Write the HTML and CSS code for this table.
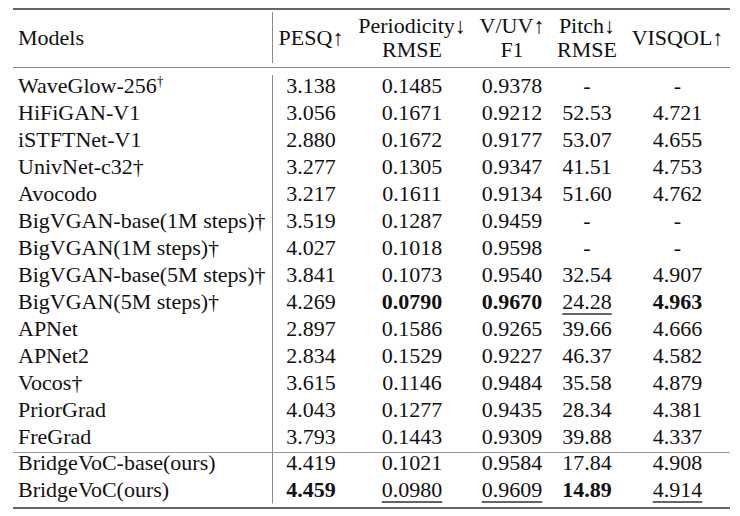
FILE: index.html
```html
<!DOCTYPE html>
<html lang="en">
<head>
<meta charset="utf-8">
<title>Vocoder comparison</title>
<link rel="stylesheet" href="styles.css">
</head>
<body>
<table class="results">
  <colgroup>
    <col class="c-model"><col class="c-pesq"><col class="c-per"><col class="c-vuv"><col class="c-pitch"><col class="c-visqol">
  </colgroup>
  <thead>
    <tr class="head">
      <th class="model">Models</th>
      <th>PESQ↑</th>
      <th>Periodicity↓<br>RMSE</th>
      <th>V/UV↑<br>F1</th>
      <th>Pitch↓<br>RMSE</th>
      <th>VISQOL↑</th>
    </tr>
  </thead>
  <tbody>
    <tr class="first"><td class="model">WaveGlow-256<span class="sup">†</span></td><td>3.138</td><td>0.1485</td><td>0.9378</td><td>-</td><td>-</td></tr>
    <tr><td class="model">HiFiGAN-V1</td><td>3.056</td><td>0.1671</td><td>0.9212</td><td>52.53</td><td>4.721</td></tr>
    <tr><td class="model">iSTFTNet-V1</td><td>2.880</td><td>0.1672</td><td>0.9177</td><td>53.07</td><td>4.655</td></tr>
    <tr><td class="model">UnivNet-c32†</td><td>3.277</td><td>0.1305</td><td>0.9347</td><td>41.51</td><td>4.753</td></tr>
    <tr><td class="model">Avocodo</td><td>3.217</td><td>0.1611</td><td>0.9134</td><td>51.60</td><td>4.762</td></tr>
    <tr><td class="model">BigVGAN-base(1M steps)†</td><td>3.519</td><td>0.1287</td><td>0.9459</td><td>-</td><td>-</td></tr>
    <tr><td class="model">BigVGAN(1M steps)†</td><td>4.027</td><td>0.1018</td><td>0.9598</td><td>-</td><td>-</td></tr>
    <tr><td class="model">BigVGAN-base(5M steps)†</td><td>3.841</td><td>0.1073</td><td>0.9540</td><td>32.54</td><td>4.907</td></tr>
    <tr><td class="model">BigVGAN(5M steps)†</td><td>4.269</td><td><b>0.0790</b></td><td><b>0.9670</b></td><td><u>24.28</u></td><td><b>4.963</b></td></tr>
    <tr><td class="model">APNet</td><td>2.897</td><td>0.1586</td><td>0.9265</td><td>39.66</td><td>4.666</td></tr>
    <tr><td class="model">APNet2</td><td>2.834</td><td>0.1529</td><td>0.9227</td><td>46.37</td><td>4.582</td></tr>
    <tr><td class="model">Vocos†</td><td>3.615</td><td>0.1146</td><td>0.9484</td><td>35.58</td><td>4.879</td></tr>
    <tr><td class="model">PriorGrad</td><td>4.043</td><td>0.1277</td><td>0.9435</td><td>28.34</td><td>4.381</td></tr>
    <tr><td class="model">FreGrad</td><td>3.793</td><td>0.1443</td><td>0.9309</td><td>39.88</td><td>4.337</td></tr>
    <tr class="mid"><td class="model">BridgeVoC-base(ours)</td><td>4.419</td><td>0.1021</td><td>0.9584</td><td>17.84</td><td>4.908</td></tr>
    <tr class="last"><td class="model">BridgeVoC(ours)</td><td><b>4.459</b></td><td><u>0.0980</u></td><td><u>0.9609</u></td><td><b>14.89</b></td><td><u>4.914</u></td></tr>
  </tbody>
</table>
</body>
</html>
```
FILE: styles.css
```css
html, body {
  margin: 0;
  background: #ffffff;
}
body {
  padding: 8px 10px 0 13px;
  font-family: "Liberation Serif", "Times New Roman", serif;
  font-size: 22px;
  color: #111;
}
.results {
  border-collapse: collapse;
  table-layout: fixed;
  width: 717px;
  border-top: 2px solid #666;
  border-bottom: 2px solid #666;
}
.c-model { width: 260px; }
.c-pesq { width: 76px; }
.c-per { width: 126px; }
.c-vuv { width: 74px; }
.c-pitch { width: 76px; }
.c-visqol { width: 105px; }

.results th,
.results td {
  padding: 0;
  text-align: center;
  vertical-align: top;
  white-space: nowrap;
  font-weight: normal;
}
.results th {
  vertical-align: middle;
  line-height: 24px;
  padding: 4px 0 5px;
  border-bottom: 1px solid #888;
}
.results td {
  line-height: 23px;
  padding-bottom: 4px;
}
.results tr.first td {
  padding-top: 5.5px;
}
.results tr.mid td,
.results tr.last td {
  line-height: 20px;
  padding-bottom: 7px;
}
.results .model {
  text-align: left;
  padding-left: 5px;
  background: linear-gradient(#8a8a8a, #8a8a8a) right top / 1px 100% no-repeat;
}
.results th.model {
  background: linear-gradient(#8a8a8a, #8a8a8a) right 2px / 1px calc(100% - 6px) no-repeat;
}
.results tr.first td.model {
  background: linear-gradient(#8a8a8a, #8a8a8a) right bottom / 1px calc(100% - 7px) no-repeat;
}
.results tr.last td.model {
  background: linear-gradient(#8a8a8a, #8a8a8a) right top / 1px calc(100% - 3.5px) no-repeat;
}
.results tr.mid td {
  border-top: 1px solid #999;
}
.sup {
  font-size: 0.62em;
  vertical-align: 0.5em;
  line-height: 0;
}
b {
  font-weight: bold;
}
u {
  text-decoration: underline;
  text-decoration-color: #666;
  text-decoration-thickness: 1.5px;
  text-underline-offset: 4px;
}
```
